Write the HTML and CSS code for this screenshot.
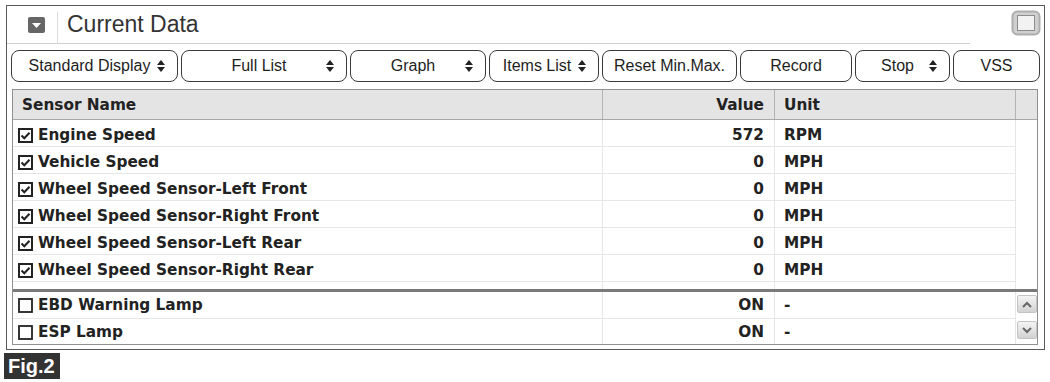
FILE: index.html
```html
<!DOCTYPE html>
<html lang="en">
<head>
  <meta charset="UTF-8">
  <title>Current Data</title>
  <link rel="stylesheet" href="styles.css">
</head>
<body>

  <div class="panel">
    <div class="panel-head">
      <div class="head-title">
        <span class="collapse">
          <svg width="17" height="16" viewBox="0 0 17 16"><rect x="0" y="0" width="17" height="16" rx="2" fill="#666"/><polygon points="4,6 13,6 8.5,11" fill="#fff"/></svg>
        </span>
        <span class="head-sep"></span>
        <h1>Current Data</h1>
      </div>
      <span class="restore">
        <svg width="30" height="26" viewBox="0 0 30 26"><rect x="1.5" y="1.5" width="27" height="23" rx="5" fill="#cfcfcf" stroke="#adadad" stroke-width="2"/><rect x="6.5" y="5.5" width="17" height="15" fill="#f2f2f2" stroke="#8c8c8c"/></svg>
      </span>
    </div>

    <div class="toolbar">
      <button class="tb sel w-std">Standard Display<svg class="updown" width="8" height="12" viewBox="0 0 8 12"><polygon points="0,5 4,0 8,5"/><polygon points="0,7 4,12 8,7"/></svg></button>
      <button class="tb sel w-full">Full List<svg class="updown" width="8" height="12" viewBox="0 0 8 12"><polygon points="0,5 4,0 8,5"/><polygon points="0,7 4,12 8,7"/></svg></button>
      <button class="tb sel w-graph">Graph<svg class="updown" width="8" height="12" viewBox="0 0 8 12"><polygon points="0,5 4,0 8,5"/><polygon points="0,7 4,12 8,7"/></svg></button>
      <button class="tb sel w-items">Items List<svg class="updown" width="8" height="12" viewBox="0 0 8 12"><polygon points="0,5 4,0 8,5"/><polygon points="0,7 4,12 8,7"/></svg></button>
      <button class="tb w-reset">Reset Min.Max.</button>
      <button class="tb w-record">Record</button>
      <button class="tb sel w-stop">Stop<svg class="updown" width="8" height="12" viewBox="0 0 8 12"><polygon points="0,5 4,0 8,5"/><polygon points="0,7 4,12 8,7"/></svg></button>
      <button class="tb w-vss">VSS</button>
    </div>

    <div class="grid">
      <div class="grid-head">
        <div class="cols">
          <div class="cell name">Sensor Name</div>
          <div class="cell val">Value</div>
          <div class="cell unit">Unit</div>
        </div>
        <div class="gutter"></div>
      </div>

      <div class="pane pane-top">
        <div class="rows">
          <div class="cols row">
            <div class="cell name"><svg class="chk" width="15" height="15" viewBox="0 0 15 15"><rect x="1" y="1" width="13" height="13" fill="#fff" stroke="#222" stroke-width="2"/><polyline points="3.5,7.5 6.3,10.3 11.5,4.8" fill="none" stroke="#222" stroke-width="2"/></svg>Engine Speed</div>
            <div class="cell val">572</div>
            <div class="cell unit">RPM</div>
          </div>
          <div class="cols row">
            <div class="cell name"><svg class="chk" width="15" height="15" viewBox="0 0 15 15"><rect x="1" y="1" width="13" height="13" fill="#fff" stroke="#222" stroke-width="2"/><polyline points="3.5,7.5 6.3,10.3 11.5,4.8" fill="none" stroke="#222" stroke-width="2"/></svg>Vehicle Speed</div>
            <div class="cell val">0</div>
            <div class="cell unit">MPH</div>
          </div>
          <div class="cols row">
            <div class="cell name"><svg class="chk" width="15" height="15" viewBox="0 0 15 15"><rect x="1" y="1" width="13" height="13" fill="#fff" stroke="#222" stroke-width="2"/><polyline points="3.5,7.5 6.3,10.3 11.5,4.8" fill="none" stroke="#222" stroke-width="2"/></svg>Wheel Speed Sensor-Left Front</div>
            <div class="cell val">0</div>
            <div class="cell unit">MPH</div>
          </div>
          <div class="cols row">
            <div class="cell name"><svg class="chk" width="15" height="15" viewBox="0 0 15 15"><rect x="1" y="1" width="13" height="13" fill="#fff" stroke="#222" stroke-width="2"/><polyline points="3.5,7.5 6.3,10.3 11.5,4.8" fill="none" stroke="#222" stroke-width="2"/></svg>Wheel Speed Sensor-Right Front</div>
            <div class="cell val">0</div>
            <div class="cell unit">MPH</div>
          </div>
          <div class="cols row">
            <div class="cell name"><svg class="chk" width="15" height="15" viewBox="0 0 15 15"><rect x="1" y="1" width="13" height="13" fill="#fff" stroke="#222" stroke-width="2"/><polyline points="3.5,7.5 6.3,10.3 11.5,4.8" fill="none" stroke="#222" stroke-width="2"/></svg>Wheel Speed Sensor-Left Rear</div>
            <div class="cell val">0</div>
            <div class="cell unit">MPH</div>
          </div>
          <div class="cols row">
            <div class="cell name"><svg class="chk" width="15" height="15" viewBox="0 0 15 15"><rect x="1" y="1" width="13" height="13" fill="#fff" stroke="#222" stroke-width="2"/><polyline points="3.5,7.5 6.3,10.3 11.5,4.8" fill="none" stroke="#222" stroke-width="2"/></svg>Wheel Speed Sensor-Right Rear</div>
            <div class="cell val">0</div>
            <div class="cell unit">MPH</div>
          </div>
          <div class="cols filler">
            <div class="cell name"></div>
            <div class="cell val"></div>
            <div class="cell unit"></div>
          </div>
        </div>
        <div class="gutter"></div>
      </div>

      <div class="pane pane-bottom">
        <div class="rows">
          <div class="cols row">
            <div class="cell name"><svg class="chk" width="15" height="15" viewBox="0 0 15 15"><rect x="1" y="1" width="13" height="13" fill="#fff" stroke="#222" stroke-width="1.8"/></svg>EBD Warning Lamp</div>
            <div class="cell val">ON</div>
            <div class="cell unit">-</div>
          </div>
          <div class="cols row">
            <div class="cell name"><svg class="chk" width="15" height="15" viewBox="0 0 15 15"><rect x="1" y="1" width="13" height="13" fill="#fff" stroke="#222" stroke-width="1.8"/></svg>ESP Lamp</div>
            <div class="cell val">ON</div>
            <div class="cell unit">-</div>
          </div>
        </div>
        <div class="scrollbar">
          <span class="sb-btn"><svg width="10" height="7" viewBox="0 0 10 7"><polyline points="1,6 5,2 9,6" fill="none" stroke="#666" stroke-width="2"/></svg></span>
          <span class="sb-btn"><svg width="10" height="7" viewBox="0 0 10 7"><polyline points="1,1 5,5 9,1" fill="none" stroke="#666" stroke-width="2"/></svg></span>
        </div>
      </div>
    </div>
  </div>

  <div class="fig">Fig.2</div>

</body>
</html>
```

FILE: styles.css
```css
body {
  margin: 0;
  background: #fff;
  font-family: "Liberation Sans", Arial, sans-serif;
  color: #222;
}
.panel {
  box-sizing: border-box;
  width: 1039px;
  height: 345px;
  margin: 5px 0 0 6px;
  border: 1px solid #5a5a5a;
  overflow: hidden;
}
.panel-head {
  display: flex;
  height: 38px;
}
.head-title {
  box-sizing: border-box;
  width: 963px;
  display: flex;
  align-items: center;
  padding-left: 21px;
  border-bottom: 1px solid #d0d0d0;
}
.collapse svg {
  display: block;
}
.head-sep {
  align-self: stretch;
  width: 1px;
  margin: 6px 0 0 12px;
  background: #dcdcdc;
}
h1 {
  margin: 0 0 0 9px;
  font-size: 23px;
  font-weight: normal;
  color: #333;
}
.restore {
  margin: 4px 3px 0 auto;
}
.restore svg {
  display: block;
}
.toolbar {
  display: flex;
  gap: 3px;
  padding: 6px 0 0 4px;
}
.tb {
  position: relative;
  box-sizing: border-box;
  height: 32px;
  padding: 0;
  border: 1px solid #3a3a3a;
  border-radius: 8px;
  background: #fff;
  font-family: "Liberation Sans", Arial, sans-serif;
  font-size: 16px;
  color: #1e1e1e;
}
.tb.sel {
  padding-right: 10px;
}
.updown {
  position: absolute;
  right: 12px;
  top: 9px;
  fill: #222;
}
.w-std { width: 167px; }
.w-full { width: 166px; }
.w-graph { width: 136px; }
.w-items { width: 110px; padding-right: 14px !important; }
.w-reset { width: 135px; }
.w-record { width: 112px; }
.w-stop { width: 95px; }
.w-vss { width: 87px; }

.grid {
  box-sizing: border-box;
  width: 1026px;
  height: 256px;
  margin: 7px 0 0 5px;
  border: 1px solid #909090;
  overflow: hidden;
  font-family: "DejaVu Sans", Verdana, sans-serif;
  font-weight: bold;
  font-size: 15.3px;
}
.grid-head,
.pane {
  display: grid;
  grid-template-columns: 1002px 22px;
}
.cols {
  display: grid;
  grid-template-columns: 589px 172px 241px;
}
.cell {
  display: flex;
  align-items: center;
  white-space: nowrap;
  overflow: hidden;
}
.cell.val {
  justify-content: flex-end;
  padding-right: 10px;
}
.cell.unit {
  padding-left: 9px;
}
.grid-head {
  height: 30px;
  box-sizing: border-box;
  background: #e4e4e4;
  border-bottom: 1px solid #a8a8a8;
}
.grid-head .cell.name {
  padding-left: 9px;
}
.grid-head .cell.val,
.grid-head .cell.unit,
.grid-head .gutter {
  border-left: 1px solid #b4b4b4;
}
.pane-top {
  height: 169px;
  border-bottom: 3px solid #7a7a7a;
}
.pane-top .row .cell {
  padding-top: 4px;
}
.pane-bottom {
  height: 52px;
  overflow: hidden;
}
.rows {
  display: flex;
  flex-direction: column;
}
.row {
  height: 27px;
  box-sizing: border-box;
  border-bottom: 1px solid #e6e6e6;
}
.row .cell.name {
  padding-left: 5px;
  gap: 5px;
}
.row .cell.val,
.row .cell.unit,
.filler .cell.val,
.filler .cell.unit,
.pane-top .gutter,
.scrollbar {
  border-left: 1px solid #e6e6e6;
}
.filler {
  flex: 1;
}
.chk {
  flex: none;
}
.scrollbar {
  display: flex;
  flex-direction: column;
  align-items: center;
  gap: 8px;
  padding-top: 3px;
}
.sb-btn {
  box-sizing: border-box;
  width: 20px;
  height: 18px;
  display: flex;
  align-items: center;
  justify-content: center;
  border: 1px solid #c4c4c4;
  border-radius: 2px;
  background: linear-gradient(#f4f4f4, #d2d2d2);
}
.fig {
  box-sizing: border-box;
  width: 56px;
  height: 26px;
  margin: 3px 0 0 4px;
  padding-left: 4px;
  background: #333;
  color: #fff;
  font-weight: bold;
  font-size: 20px;
  line-height: 26px;
}
```
